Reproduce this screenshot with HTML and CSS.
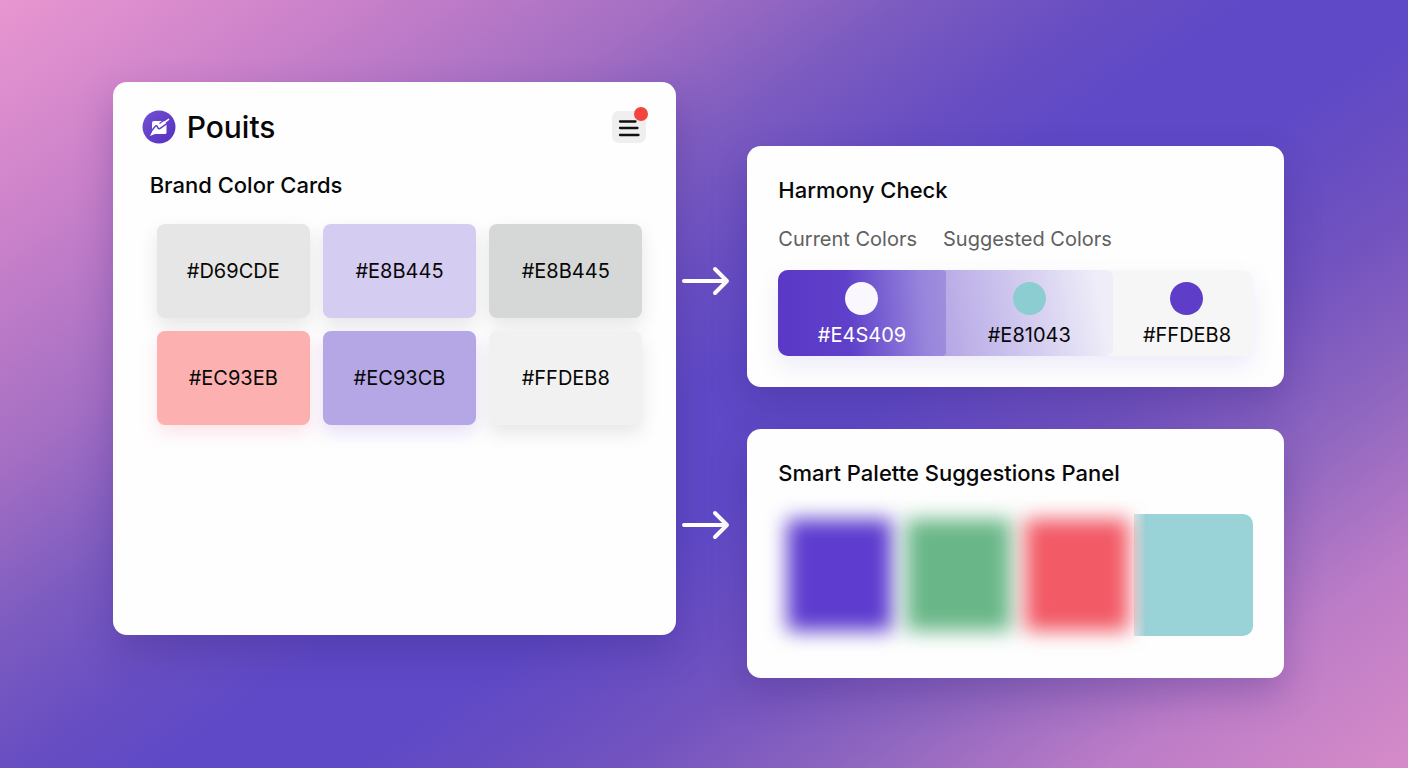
FILE: index.html
```html
<!DOCTYPE html>
<html lang="en">
<head>
<meta charset="utf-8">
<meta name="viewport" content="width=device-width, initial-scale=1">
<title>Pouits</title>
<link rel="stylesheet" href="styles.css">
</head>
<body>
<main class="stage">
  <section class="panel brand-panel">
    <header class="topbar">
      <div class="brand">
        <svg class="logo" viewBox="0 0 34 34" aria-hidden="true">
          <defs><linearGradient id="lg" x1="0" y1="0" x2="1" y2="1"><stop offset="0" stop-color="#7350d2"/><stop offset="1" stop-color="#5430c0"/></linearGradient></defs>
          <circle cx="17" cy="17" r="16.500" fill="url(#lg)"/>
          <path d="M12 11H22L24.500 14V22.500Q24.500 24 23 24H13L8 26L10 22V13Q10 11 12 11Z" fill="#fff"/>
          <path d="M9 21.500L13.500 16Q14.700 15 15.500 17Q16.500 19.800 18.500 18.200L26 12.800" fill="none" stroke="#6440ca" stroke-width="1.500"/>
          <path d="M16.500 15.500Q17.500 17.500 19.500 16L27 10Q28 8.500 26.500 8.500Z" fill="#fff"/>
          <path d="M17.500 13.600L26 7.500" fill="none" stroke="#6440ca" stroke-width="1.200"/>
        </svg>
        <h1 class="brand-name">Pouits</h1>
      </div>
      <button class="menu" type="button" aria-label="Menu">
        <svg viewBox="0 0 34 32" aria-hidden="true"><path d="M8 10.500H23.500M8 17H25.500M8 24H26.500" stroke="#111" stroke-width="2.300" stroke-linecap="round"/></svg>
        <span class="dot"></span>
      </button>
    </header>
    <h2 class="title brand-title">Brand Color Cards</h2>
    <ul class="cards">
      <li class="card silver">#D69CDE</li>
      <li class="card lilac">#E8B445</li>
      <li class="card gray">#E8B445</li>
      <li class="card coral">#EC93EB</li>
      <li class="card violet">#EC93CB</li>
      <li class="card pale">#FFDEB8</li>
    </ul>
  </section>
  <div class="arrows" aria-hidden="true">
    <svg class="arrow" viewBox="0 0 48 32"><path d="M2 16H45M33 4L45 16L33 28" /></svg>
    <svg class="arrow" viewBox="0 0 48 32"><path d="M2 16H45M33 4L45 16L33 28" /></svg>
  </div>
  <div class="side">
    <section class="panel side-panel">
      <h2 class="title">Harmony Check</h2>
      <div class="labels"><span>Current Colors</span><span>Suggested Colors</span></div>
      <div class="harmony">
        <div class="tone tone-a"><i class="bead bead-white"></i><span>#E4S409</span></div>
        <div class="tone tone-b"><i class="bead bead-teal"></i><span>#E81043</span></div>
        <div class="tone tone-c"><i class="bead bead-purple"></i><span>#FFDEB8</span></div>
      </div>
    </section>
    <section class="panel side-panel palette-panel">
      <h2 class="title">Smart Palette Suggestions Panel</h2>
      <div class="palette">
        <div class="swatch blurred purple"></div>
        <div class="swatch blurred green"></div>
        <div class="swatch blurred red"></div>
        <div class="swatch teal"></div>
      </div>
    </section>
  </div>
</main>
</body>
</html>
```
FILE: styles.css
```css
* { box-sizing: border-box; }

body {
  margin: 0;
  font-family: Inter, "Liberation Sans", sans-serif;
  color: #080808;
}

.stage {
  min-height: 100vh;
  display: grid;
  grid-template-columns: 564fr 71px 537fr;
  align-items: start;
  padding: 82px 8.8% 64px 8%;
  background: linear-gradient(145deg,
    #e896d0 0%, #cc82ca 13%, #a36ec3 27%, #7d5cc0 36%, #684ec2 44%,
    #5f49c6 50%, #5f49c6 58%, #7152bf 68%, #9067c0 78%, #bc7cc7 88%, #d68bc8 100%);
}

.panel {
  background: #fefefe;
  border-radius: 14px;
  box-shadow: 0 16px 36px rgba(55, 35, 125, 0.3);
}

.brand-panel {
  min-height: 553px;
  padding: 28px 30px 32px 29px;
}

.topbar, .brand { display: flex; align-items: center; }
.topbar { justify-content: space-between; }
.brand { gap: 11px; }
.logo { width: 34px; height: 34px; }

.brand-name {
  margin: 0;
  font-size: 30px;
  line-height: 34px;
  font-weight: 500;
}

.menu {
  position: relative;
  width: 34px;
  height: 32px;
  padding: 0;
  border: 0;
  border-radius: 7px;
  background: #efeff0;
}
.menu svg { display: block; width: 34px; height: 32px; }

.dot {
  position: absolute;
  top: -4px;
  right: -2px;
  width: 14px;
  height: 14px;
  border-radius: 50%;
  background: #f3443e;
}

.title {
  margin: 0;
  font-size: 22px;
  line-height: 28px;
  font-weight: 500;
}
.brand-title { margin: 27px 0 0 8px; }

.cards {
  list-style: none;
  margin: 25px 4px 0 15px;
  padding: 0;
  display: grid;
  grid-template-columns: repeat(3, 1fr);
  gap: 13px;
}

.card {
  display: flex;
  align-items: center;
  justify-content: center;
  height: 94px;
  border-radius: 8px;
  font-size: 20px;
  box-shadow: 0 8px 18px rgba(60, 60, 70, 0.12);
}
.silver { background: #e6e6e6; }
.lilac { background: #d5ccf2; }
.gray { background: #d6d8d7; }
.coral { background: #fcb1b0; box-shadow: 0 8px 18px rgba(240, 120, 150, 0.2); }
.violet { background: #b5a7e5; box-shadow: 0 8px 18px rgba(140, 100, 220, 0.2); }
.pale { background: #f1f1f1; }

.arrows {
  display: grid;
  gap: 212px;
  padding: 183px 0 0 6px;
}
.arrow {
  width: 48px;
  height: 32px;
  fill: none;
  stroke: #fff;
  stroke-width: 4;
  stroke-linecap: round;
  stroke-linejoin: round;
}

.side {
  display: grid;
  gap: 42px;
  padding-top: 64px;
}
.side-panel { padding: 30px 31px 31px; }
.palette-panel { padding-bottom: 42px; }

.labels {
  display: flex;
  gap: 26px;
  margin-top: 22px;
  font-size: 20px;
  line-height: 26px;
  color: #606060;
}

.harmony {
  display: grid;
  grid-template-columns: 167fr 167fr 140fr;
  margin-top: 18px;
  border-radius: 10px;
  background: linear-gradient(90deg, #b5a7e5 0%, #b5a7e5 50%, #f6f6f7 51%);
  box-shadow: 0 10px 24px rgba(90, 60, 200, 0.1);
}
.tone {
  display: flex;
  flex-direction: column;
  align-items: center;
  gap: 6px;
  height: 86px;
  padding-top: 12px;
  font-size: 20px;
  line-height: 28px;
}
.tone-a {
  color: #fff;
  border-radius: 10px 4px 4px 10px;
  background: linear-gradient(85deg, #5a38c6 0%, #5f40ca 42%, #9785dc 85%, #a08fdc 100%);
}
.tone-b {
  border-radius: 0 8px 8px 0;
  background: linear-gradient(80deg, #b5a7e5 0%, #d7d0f1 55%, #eeedf8 90%);
}
.tone-c { padding-left: 8px; }
.bead { width: 33px; height: 33px; border-radius: 50%; }
.bead-white { background: #faf8fe; }
.bead-teal { background: #8bcdd0; }
.bead-purple { background: #5e3ec8; }

.palette {
  display: grid;
  grid-template-columns: repeat(4, 1fr);
  margin-top: 27px;
}
.swatch { height: 122px; }
.blurred {
  position: relative;
  z-index: 1;
  height: 112px;
  margin: 5px 5px 5px 9px;
  filter: blur(10px);
}
.purple { background: #5d3ccf; }
.green { background: #69b788; }
.red { background: #f25a66; }
.teal {
  background: linear-gradient(90deg, rgba(153, 211, 216, 0.4) 0%, #99d3d8 10%);
  border-radius: 0 10px 10px 0;
}
```
